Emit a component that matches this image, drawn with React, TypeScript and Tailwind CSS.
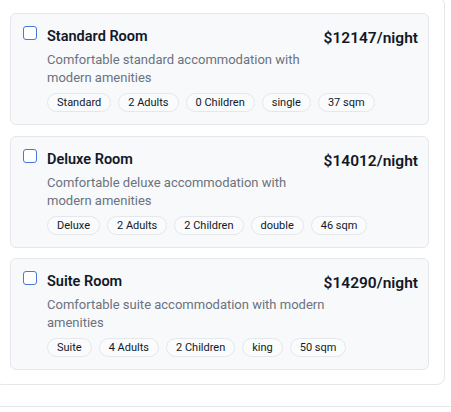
import React from "react";

type Room = {
  name: string;
  description: string;
  price: number;
  tags: string[];
};

const rooms: Room[] = [
  {
    name: "Standard Room",
    description: "Comfortable standard accommodation with modern amenities",
    price: 12147,
    tags: ["Standard", "2 Adults", "0 Children", "single", "37 sqm"],
  },
  {
    name: "Deluxe Room",
    description: "Comfortable deluxe accommodation with modern amenities",
    price: 14012,
    tags: ["Deluxe", "2 Adults", "2 Children", "double", "46 sqm"],
  },
  {
    name: "Suite Room",
    description: "Comfortable suite accommodation with modern amenities",
    price: 14290,
    tags: ["Suite", "4 Adults", "2 Children", "king", "50 sqm"],
  },
];

function RoomCard({ room }: { room: Room }) {
  return (
    <div className="flex gap-[10px] rounded-md border border-[#e5e7eb] bg-[#f8f9fb] py-3 pl-3 pr-[10px]">
      <span className="h-[14px] w-[14px] shrink-0 rounded-[3px] border-[1.5px] border-[#4a78d6] bg-white" />
      <div className="flex-1">
        <div className="flex items-start justify-between gap-2">
          <div className="mt-[1px] text-[14.5px] font-semibold leading-[20px] text-[#111827]">
            {room.name}
          </div>
          <div className="mt-[1px] text-[15.5px] font-semibold leading-[22px] text-[#111827]">
            ${room.price}/night
          </div>
        </div>
        <p className="mt-[2px] max-w-[282px] text-[13px] leading-[18px] text-[#6b7280]">
          {room.description}
        </p>
        <div className="mt-[6px] flex flex-wrap gap-[7px]">
          {room.tags.map((tag) => (
            <span
              key={tag}
              className="rounded-full border border-[#e5e7eb] bg-[#fafbfc] px-[9px] text-[11px] leading-[17px] text-[#111827]"
            >
              {tag}
            </span>
          ))}
        </div>
      </div>
    </div>
  );
}

export default function App() {
  return (
    <div
      className="min-h-[412px] bg-white"
      style={{ fontFamily: "Roboto, \"Noto Sans\", sans-serif" }}
    >
      <div className="-ml-[6px] -mt-[3px] w-[451px] rounded-lg border border-[#e5e7eb] bg-white px-[15px] pb-[14px] pt-[15px]">
        <div className="flex flex-col gap-[10.5px]">
          {rooms.map((room) => (
            <RoomCard key={room.name} room={room} />
          ))}
        </div>
      </div>
      <div className="mt-[21px] h-8 border-t border-[#e5e7eb]" />
    </div>
  );
}
